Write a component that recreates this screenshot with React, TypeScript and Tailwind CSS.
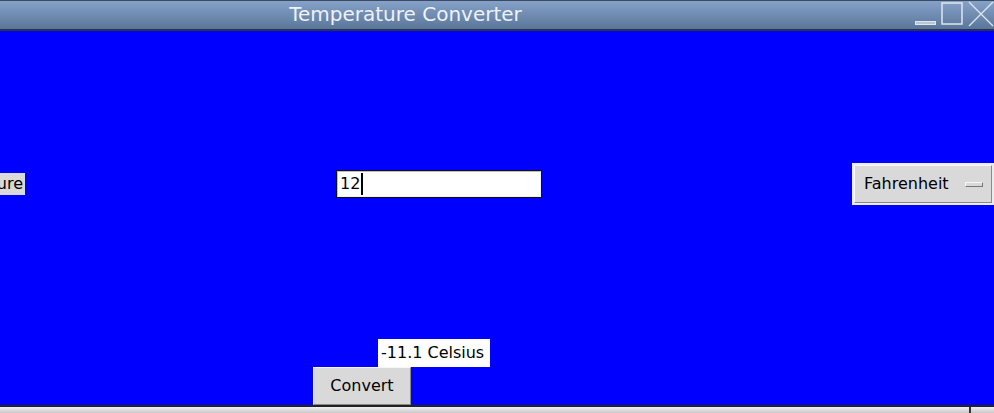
export default function App() {
  return (
    <div className="w-[994px] h-[413px] flex flex-col overflow-hidden bg-[#0000ff] font-['DejaVu_Sans',sans-serif]">
      {/* title bar */}
      <div className="h-[31px] shrink-0 flex items-center border-t border-t-[#3a4a60] border-b-2 border-b-[#2a3444] bg-gradient-to-b from-[#86a2c9] to-[#5a7699]">
        <div className="flex-1 text-center text-[20px] leading-none text-[#eef2f7] pr-[104px] pb-[2px]">Temperature Converter</div>
        <div className="flex items-end gap-[5px] h-full">
          <div className="w-[21px] h-[4px] mb-[4px] border border-[#dfe6ee] bg-[#b8c6d8]" />
          <svg width="22" height="24" viewBox="0 0 22 24" className="mb-[3px]">
            <rect x="1" y="1" width="20" height="21" fill="none" stroke="#dfe6ee" strokeWidth="1.5" />
          </svg>
          <svg width="26" height="26" viewBox="0 0 26 26" className="mb-[2px]">
            <path d="M1 1 L25 25 M25 1 L1 25" stroke="#dfe6ee" strokeWidth="1.3" fill="none" />
          </svg>
        </div>
      </div>

      {/* body */}
      <div className="flex-1 flex flex-col text-[16px] text-black">
        <div className="mt-[132px] h-[42px] flex items-center">
          {/* label is clipped by the window's left edge */}
          <div className="w-[25px] h-[22px] bg-[#d9d9d9] flex justify-end items-center overflow-hidden whitespace-nowrap pr-[2px]">
            Temperature
          </div>
          <div className="ml-[311px] w-[206px] h-[28px] bg-white border border-[#111] flex items-center">
            <div className="w-full h-full border border-[#bdbdbd] border-r-[#f0f0f0] border-b-[#f0f0f0] flex items-center pl-[2px]">
              <span>12</span>
              <span className="w-[2px] h-[22px] bg-black ml-[1px]" />
            </div>
          </div>
          <div className="ml-[310px] w-[142px] h-[42px] bg-[#ececec] p-[2px] shrink-0">
            <div className="w-full h-full bg-[#d9d9d9] border border-[#f7f7f7] border-r-[#8a8a8a] border-b-[#8a8a8a] flex items-center pl-[9px] pr-[8px]">
              <span className="flex-1">Fahrenheit</span>
              <div className="w-[18px] h-[5px] bg-[#d9d9d9] border border-[#f7f7f7] border-r-[#777] border-b-[#777]" />
            </div>
          </div>
        </div>

        <div className="mt-[134px] ml-[378px] w-[112px] h-[28px] bg-white flex items-center pl-[3px] whitespace-nowrap">
          -11.1 Celsius
        </div>
        <div className="ml-[313px] w-[98px] h-[38px] bg-[#d9d9d9] border border-[#f5f5f5] border-r-[#888] border-b-[#888] flex items-center justify-center">
          Convert
        </div>
      </div>

      {/* bottom strip */}
      <div className="h-[8px] shrink-0 flex border-t-2 border-t-[#222]">
        <div className="w-[969px] bg-gradient-to-b from-[#f2f2f2] to-[#c8c8c8]" />
        <div className="w-[2px] bg-[#333]" />
        <div className="flex-1 bg-gradient-to-b from-[#f2f2f2] to-[#c8c8c8]" />
      </div>
    </div>
  );
}
